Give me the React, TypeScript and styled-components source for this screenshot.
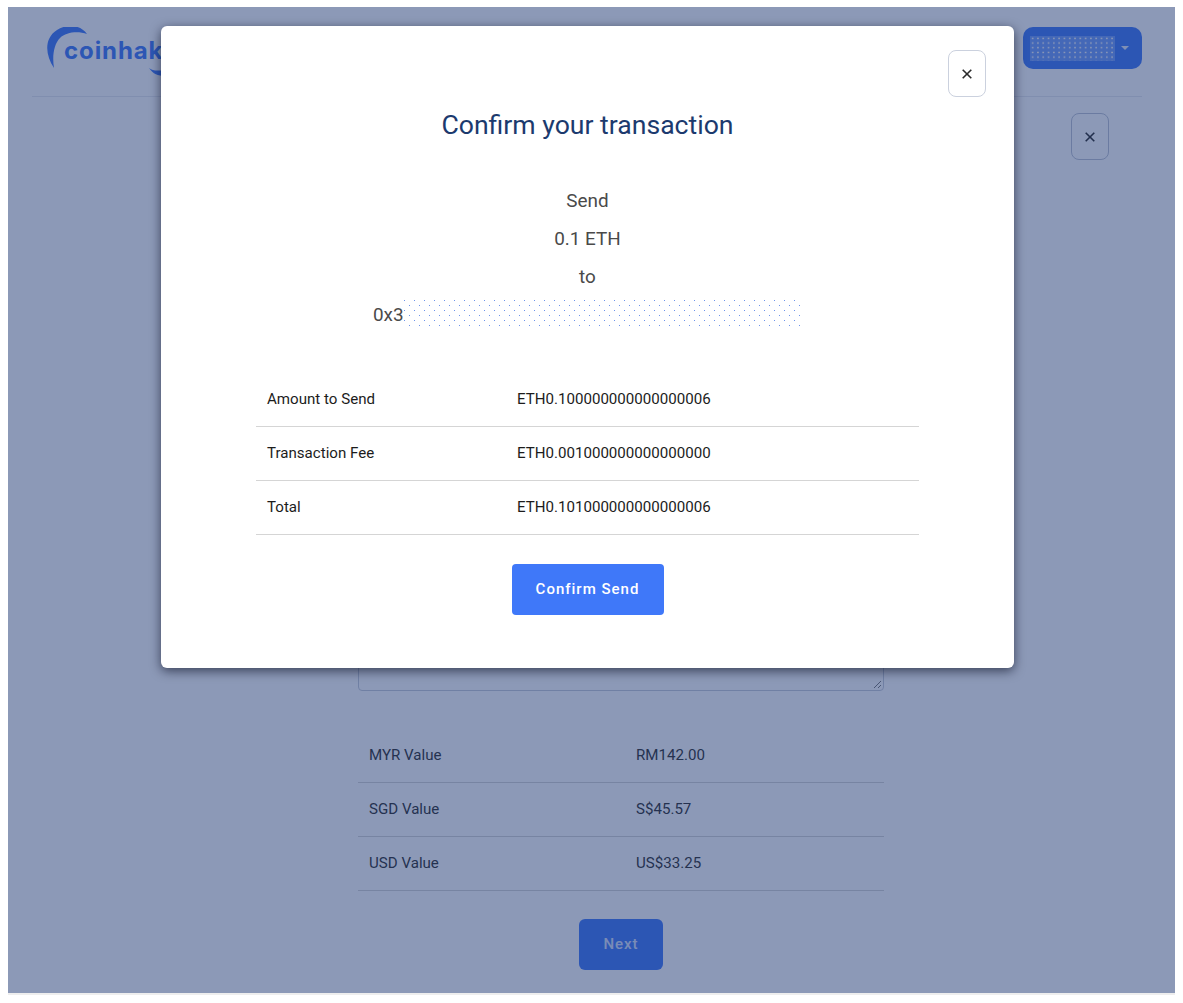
import React from "react";
import styled, { createGlobalStyle } from "styled-components";

const Global = createGlobalStyle`
  html, body { margin: 0; padding: 0; background: #fff; }
  body { font-family: Roboto, "Liberation Sans", sans-serif; overflow: hidden; }
  * { box-sizing: border-box; }
`;

const Frame = styled.div`
  position: relative;
  margin: 7px 8px 0;
  width: 1167px;
  height: 986px;
  overflow: hidden;
  background: #fff;
`;

const FrameEdge = styled.div`
  margin: 0 8px;
  width: 1167px;
  height: 2px;
  background: #eeeeee;
`;

const Header = styled.header`
  height: 90px;
  margin: 0 33px 0 24px;
  border-bottom: 1px solid #e6e9ef;
  display: flex;
  align-items: flex-start;
  justify-content: space-between;
`;

const Logo = styled.div`
  position: relative;
  margin: 20px 0 0 15px;
  width: 190px;
  height: 50px;
  color: #3f78f9;
`;

const LogoArc = styled.svg`
  position: absolute;
  left: 0;
  top: 0;
`;

const LogoText = styled.span`
  position: absolute;
  left: 17px;
  top: 10px;
  font-family: Inter, Lato, sans-serif;
  font-size: 24px;
  line-height: 28px;
  font-weight: 700;
  letter-spacing: 0.9px;
`;

const AccountButton = styled.button`
  margin-top: 20px;
  width: 119px;
  height: 42px;
  border: 0;
  border-radius: 10px;
  background: #3f78f9;
  display: flex;
  align-items: center;
  gap: 6px;
  padding: 0 0 0 7px;
`;

const AccountMask = styled.span`
  display: block;
  width: 85px;
  height: 25px;
  background-color: #6f9cff;
  background-image: radial-gradient(circle, #ffffff 0.8px, transparent 1.1px);
  background-size: 5.3px 4.7px;
`;

const AddressPrefix = styled.span`
  display: block;
  width: 30px;
`;

const AddressMask = styled.span`
  display: block;
  width: 401px;
  height: 30px;
  margin: -4px 0 0 -2px;
  background-color: transparent;
  background-image:
    radial-gradient(circle at 0.5px 0.5px, #6f95ea 0.7px, transparent 0.8px),
    radial-gradient(circle at 0.5px 0.5px, #6f95ea 0.7px, transparent 0.8px);
  background-size: 10px 10px;
  background-position: 3px 2px, 8px 7px;
`;

const Caret = styled.span`
  width: 0;
  height: 0;
  border-left: 4px solid transparent;
  border-right: 4px solid transparent;
  border-top: 4px solid #e4ebfb;
`;

const Main = styled.main`
  padding: 0 66px 0 350px;
`;

const CloseButton = styled.button<{ $tint: string }>`
  width: 38px;
  height: 47px;
  border: 1px solid ${(p) => p.$tint};
  border-radius: 8px;
  background: #fff;
  color: #2a2a2a;
  display: flex;
  align-items: center;
  justify-content: center;
  padding: 0;
`;

const PageCloseRow = styled.div`
  display: flex;
  justify-content: flex-end;
  padding-top: 16px;
`;

const TextArea = styled.div`
  position: relative;
  margin-top: 150px;
  width: 526px;
  height: 381px;
  border: 1px solid #c6ccd8;
  border-radius: 4px;
  background: #fff;
`;

const Grip = styled.svg`
  position: absolute;
  right: 1px;
  bottom: 1px;
`;

const PageTable = styled.div`
  margin-top: 38px;
  width: 526px;
`;

const Row = styled.div<{ $col: number; $color: string }>`
  height: 54px;
  display: grid;
  grid-template-columns: ${(p) => p.$col}px 1fr;
  align-items: center;
  padding: 0 0 2px 11px;
  border-bottom: 1px solid #d5d5d5;
  font-size: 15.1px;
  color: ${(p) => p.$color};
`;

const NextRow = styled.div`
  width: 526px;
  display: flex;
  justify-content: center;
  margin-top: 28px;
`;

const NextButton = styled.button`
  width: 84px;
  height: 51px;
  border: 0;
  border-radius: 6px;
  padding: 0 0 2px;
  background: #3f78f9;
  color: #fff;
  font-family: inherit;
  font-weight: 500;
  font-size: 15px;
  letter-spacing: 1px;
  & > span { opacity: 0.8; }
`;

const Overlay = styled.div`
  position: absolute;
  inset: 0;
  background: rgba(25, 52, 112, 0.5);
  display: flex;
  justify-content: center;
  align-items: flex-start;
  padding: 19px 8px 0 0;
`;

const Modal = styled.section`
  width: 853px;
  height: 642px;
  background: #fff;
  border-radius: 6px;
  box-shadow: 0 3px 11px rgba(5, 10, 30, 0.62);
  padding: 24px 28px 0 95px;
  display: flex;
  flex-direction: column;
`;

const ModalClose = styled.div`
  display: flex;
  justify-content: flex-end;
  height: 47px;
`;

const Title = styled.h2`
  margin: 10px 67px 0 0;
  font-size: 26.6px;
  line-height: 36px;
  font-weight: 400;
  color: #1c3a6e;
  text-align: center;
`;

const Summary = styled.div`
  margin: 39px 67px 0 0;
  display: flex;
  flex-direction: column;
  align-items: center;
  font-size: 18.9px;
  line-height: 38px;
  color: #4a4a4a;
`;

const Address = styled.div`
  display: flex;
  align-items: center;
  height: 38px;
`;

const ModalTable = styled.div`
  margin-top: 39px;
  width: 663px;
`;

const ConfirmRow = styled.div`
  display: flex;
  justify-content: center;
  margin: 29px 67px 0 0;
`;

const ConfirmButton = styled.button`
  width: 152px;
  height: 51px;
  border: 0;
  border-radius: 4px;
  padding: 0 0 2px;
  background: #3f78f9;
  color: #fff;
  font-family: inherit;
  font-weight: 500;
  font-size: 15px;
  letter-spacing: 1px;
`;

const XIcon = () => (
  <svg width="10" height="10" viewBox="0 0 10 10" fill="none" stroke="currentColor" strokeWidth="1.6">
    <path d="M0.7 0.7 L9.3 9.3 M9.3 0.7 L0.7 9.3" />
  </svg>
);

const fiat = [
  ["MYR Value", "RM142.00"],
  ["SGD Value", "S$45.57"],
  ["USD Value", "US$33.25"],
];

const confirm = [
  ["Amount to Send", "ETH0.100000000000000006"],
  ["Transaction Fee", "ETH0.001000000000000000"],
  ["Total", "ETH0.101000000000000006"],
];

export default function App() {
  return (
    <>
      <Global />
      <Frame>
        <Header>
          <Logo>
            <LogoArc width="130" height="50" viewBox="47 27 130 50" fill="currentColor">
              <path d="M54 68 C45 55 44 38 57 30 C66 24 80 24 87 34 C78 31 66 32 60 38 C54 44 52 56 54 68 Z" />
              <path d="M149 68 C153 71 157 71 165 70 L165 76 C158 76 153 74 149 68 Z" />
            </LogoArc>
            <LogoText>coinhakes</LogoText>
          </Logo>
          <AccountButton aria-label="Account">
            <AccountMask />
            <Caret />
          </AccountButton>
        </Header>
        <Main>
          <PageCloseRow>
            <CloseButton $tint="#bcc3d3" aria-label="Close">
              <XIcon />
            </CloseButton>
          </PageCloseRow>
          <TextArea>
            <Grip width="10" height="10" viewBox="0 0 10 10" stroke="#555" strokeWidth="0.8">
              <path d="M2 9 L9 2 M6 9 L9 6" />
            </Grip>
          </TextArea>
          <PageTable>
            {fiat.map(([k, v]) => (
              <Row key={k} $col={267} $color="#303030">
                <span>{k}</span>
                <span>{v}</span>
              </Row>
            ))}
          </PageTable>
          <NextRow>
            <NextButton>
              <span>Next</span>
            </NextButton>
          </NextRow>
        </Main>
        <Overlay>
          <Modal>
            <ModalClose>
              <CloseButton $tint="#cbd1de" aria-label="Close">
                <XIcon />
              </CloseButton>
            </ModalClose>
            <Title>Confirm your transaction</Title>
            <Summary>
              <span>Send</span>
              <span>0.1 ETH</span>
              <span>to</span>
              <Address>
                <AddressPrefix>0x3</AddressPrefix>
                <AddressMask />
              </Address>
            </Summary>
            <ModalTable>
              {confirm.map(([k, v]) => (
                <Row key={k} $col={250} $color="#1c1c1c">
                  <span>{k}</span>
                  <span>{v}</span>
                </Row>
              ))}
            </ModalTable>
            <ConfirmRow>
              <ConfirmButton>Confirm Send</ConfirmButton>
            </ConfirmRow>
          </Modal>
        </Overlay>
      </Frame>
      <FrameEdge />
    </>
  );
}
